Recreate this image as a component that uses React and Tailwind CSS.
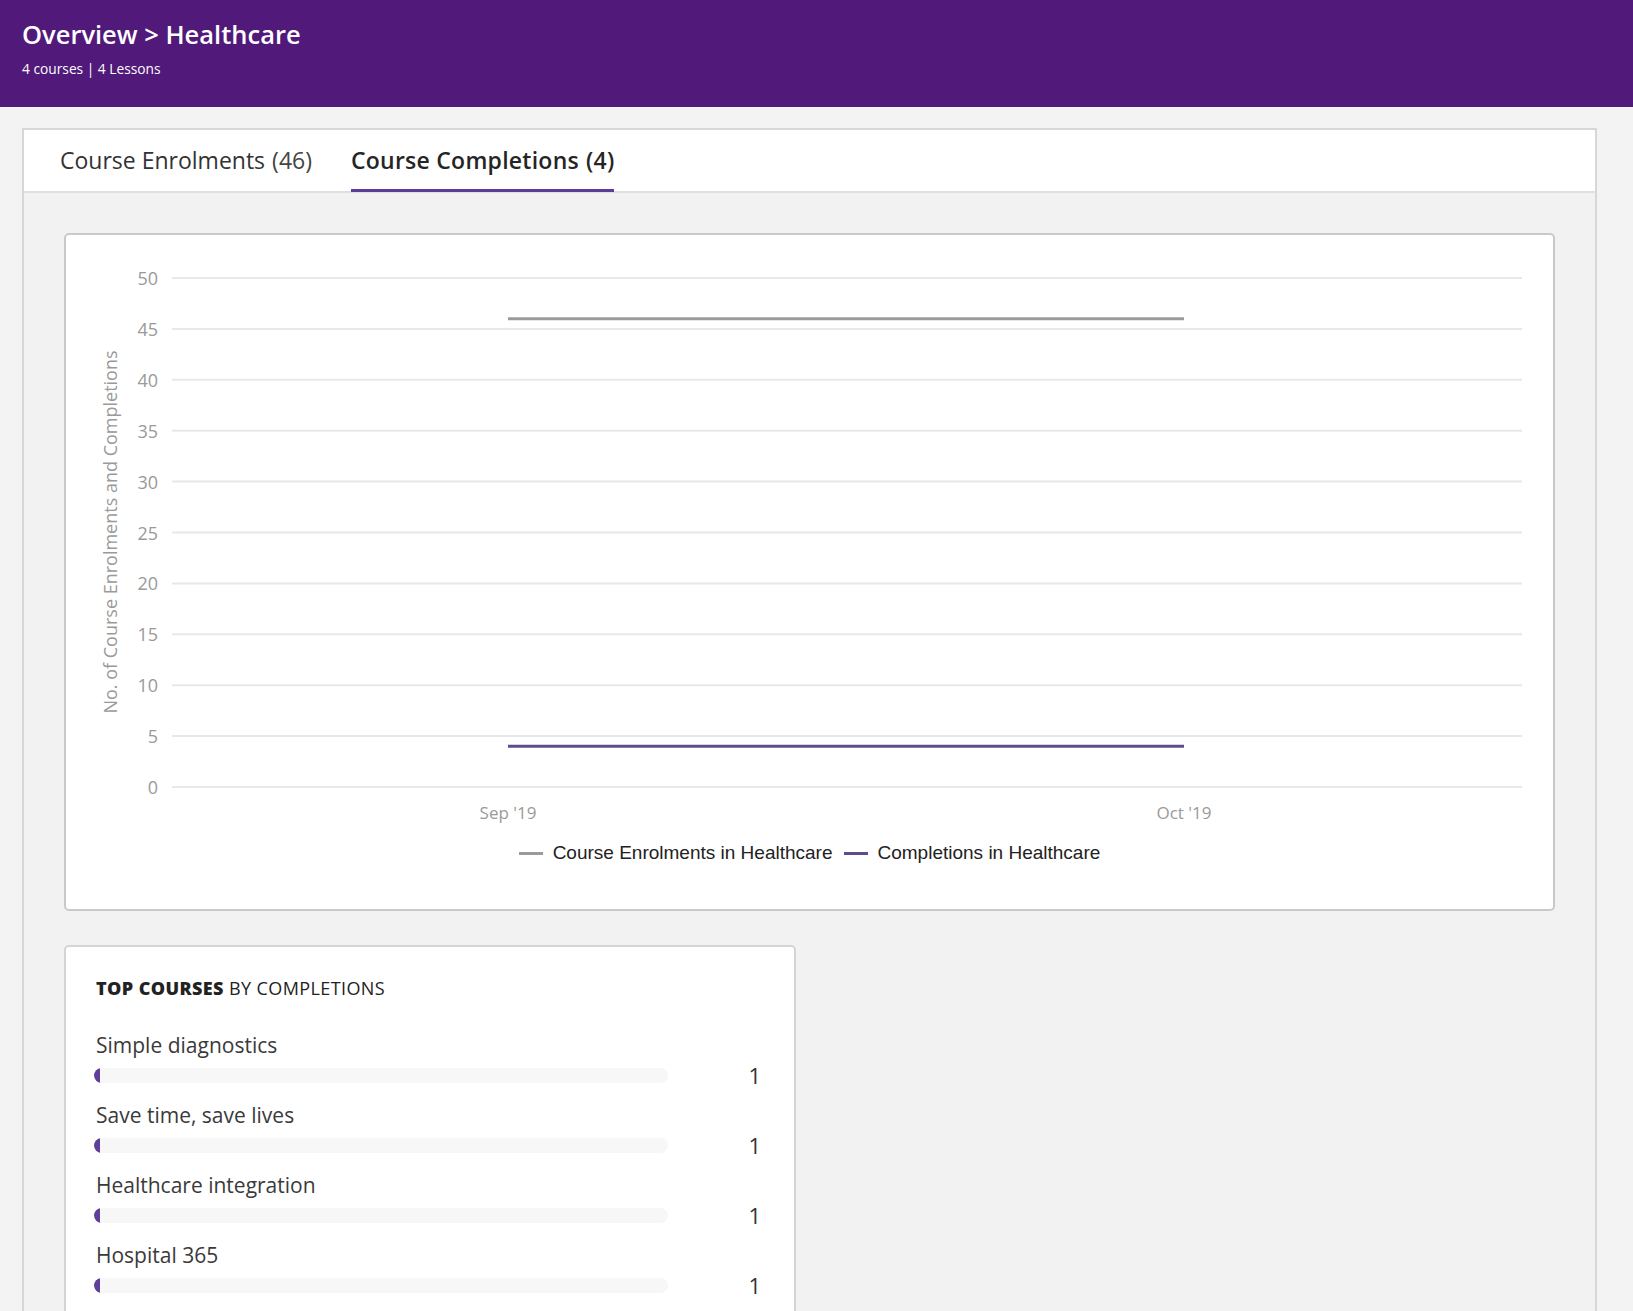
import React from "react";

const TICKS = [50, 45, 40, 35, 30, 25, 20, 15, 10, 5, 0];
const yFor = (v) => 43 + (50 - v) * 10.18;

const COURSES = [
  { name: "Simple diagnostics", value: 1 },
  { name: "Save time, save lives", value: 1 },
  { name: "Healthcare integration", value: 1 },
  { name: "Hospital 365", value: 1 },
];

const Chart = () => (
  <div className="h-[678px] bg-white border-2 border-[#c9c9c9] rounded-[5px] flex flex-col">
    <svg width="100%" height="600" className="block">
      {TICKS.map((t) => (
        <g key={t}>
          <line x1="106" x2="1456" y1={yFor(t)} y2={yFor(t)} stroke="#e8e8e8" strokeWidth="2" />
          <text x="92" y={yFor(t)} textAnchor="end" dominantBaseline="central" fontSize="18" fill="#9a9a9a">
            {t}
          </text>
        </g>
      ))}
      <text
        x="44"
        y="297"
        transform="rotate(-90 44 297)"
        textAnchor="middle"
        dominantBaseline="central"
        fontSize="18"
        fill="#9a9a9a"
      >
        No. of Course Enrolments and Completions
      </text>
      <line x1="442" x2="1118" y1={yFor(46)} y2={yFor(46)} stroke="#9b9b9b" strokeWidth="3" />
      <line x1="442" x2="1118" y1={yFor(4)} y2={yFor(4)} stroke="#5f4b8b" strokeWidth="3" />
      <text x="442" y="577" textAnchor="middle" dominantBaseline="central" fontSize="17" fill="#9a9a9a">
        Sep '19
      </text>
      <text x="1118" y="577" textAnchor="middle" dominantBaseline="central" fontSize="17" fill="#9a9a9a">
        Oct '19
      </text>
    </svg>
    <div className="flex justify-center items-center h-[36px] font-['Liberation_Sans',Arial,sans-serif] text-[19px] text-[#222]">
      <span className="w-[24px] h-[3px] bg-[#9b9b9b] mr-[10px]" />
      <span>Course Enrolments in Healthcare</span>
      <span className="w-[24px] h-[3px] bg-[#5f4b8b] ml-[11px] mr-[10px]" />
      <span>Completions in Healthcare</span>
    </div>
  </div>
);

const TopCourses = () => (
  <div className="w-[732px] mt-[34px] bg-white border-2 border-[#d4d4d4] rounded-[5px] px-[28px] pt-[29px] pb-[30px]">
    <h3 className="pl-[2px] text-[18px] leading-[24px] tracking-[0.4px] text-[#222] mb-[30px]">
      <span className="font-extrabold">TOP COURSES</span> BY COMPLETIONS
    </h3>
    {COURSES.map((c) => (
      <div key={c.name} className="pb-[10px]">
        <div className="pl-[2px] text-[21px] leading-[30px] text-[#3a3a3a]">{c.name}</div>
        <div className="flex items-center h-[30px]">
          <div className="w-[574px] h-[15px] rounded-full bg-[#f7f7f7] overflow-hidden">
            <div className="w-[6px] h-full bg-[#5f3f9a] rounded-l-full" />
          </div>
          <div className="flex-1 text-right pr-[5px] text-[22px] text-[#333]">{c.value}</div>
        </div>
      </div>
    ))}
  </div>
);

export default function App() {
  return (
    <div className="min-h-screen bg-[#f3f3f3] font-['Segoe_UI','Open_Sans',sans-serif]">
      <header className="h-[107px] bg-[#511a7a] px-[22px] pt-[18px] text-white">
        <h1 className="text-[25.5px] leading-[32px] font-semibold">Overview &gt; Healthcare</h1>
        <p className="mt-[9px] text-[13.75px] leading-[20px]">4 courses | 4 Lessons</p>
      </header>

      <div className="ml-[22px] mr-[36px] mt-[21px] border-2 border-[#d7d7d7]">
        <div className="h-[63px] bg-white border-b-2 border-[#e0e0e0] pl-[36px] flex gap-[39px]">
          <div className="h-[61px] flex items-center text-[23px] text-[#333]">
            Course Enrolments <span className="ml-[7px] text-[#444]">(46)</span>
          </div>
          <div className="relative h-[61px] flex items-center text-[23px] tracking-[0.25px] font-semibold text-[#252525]">
            Course Completions <span className="ml-[7px]">(4)</span>
            <span className="absolute left-0 right-0 -bottom-[1px] h-[3px] bg-[#5b3e96]" />
          </div>
        </div>
        <div className="bg-[#f2f2f2] p-10">
          <Chart />
          <TopCourses />
        </div>
      </div>
    </div>
  );
}
